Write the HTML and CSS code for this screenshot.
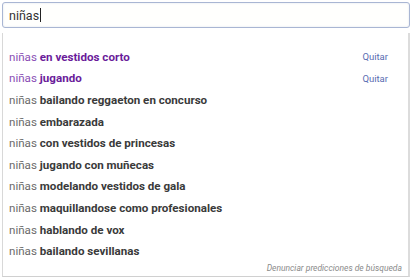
FILE: index.html
```html
<!DOCTYPE html>
<html lang="es">
<head>
    <meta charset="UTF-8">
    <meta name="viewport" content="width=device-width, initial-scale=1.0">
    <title>Búsqueda</title>
    <link rel="stylesheet" href="styles.css">
</head>
<body>
    <div class="search">
        <div class="search-box">
            <span class="search-text">niñas</span><span class="caret"></span>
        </div>

        <!-- Suggestions dropdown -->
        <div class="suggestions">
            <ul class="suggestion-list">
                <li class="suggestion visited">
                    <span class="query">niñas <b>en vestidos corto</b></span>
                    <a href="#" class="remove-link">Quitar</a>
                </li>
                <li class="suggestion visited">
                    <span class="query">niñas <b>jugando</b></span>
                    <a href="#" class="remove-link">Quitar</a>
                </li>
                <li class="suggestion"><span class="query">niñas <b>bailando reggaeton en concurso</b></span></li>
                <li class="suggestion"><span class="query">niñas <b>embarazada</b></span></li>
                <li class="suggestion"><span class="query">niñas <b>con vestidos de princesas</b></span></li>
                <li class="suggestion"><span class="query">niñas <b>jugando con muñecas</b></span></li>
                <li class="suggestion"><span class="query">niñas <b>modelando vestidos de gala</b></span></li>
                <li class="suggestion"><span class="query">niñas <b>maquillandose como profesionales</b></span></li>
                <li class="suggestion"><span class="query">niñas <b>hablando de vox</b></span></li>
                <li class="suggestion"><span class="query">niñas <b>bailando sevillanas</b></span></li>
            </ul>
            <div class="suggestions-footer">
                <a href="#" class="report-link">Denunciar predicciones de búsqueda</a>
            </div>
        </div>
    </div>
</body>
</html>
```

FILE: styles.css
```css
/* Base */
* {
    margin: 0;
    padding: 0;
    box-sizing: border-box;
}

body {
    background-color: #ffffff;
    font-family: Roboto, 'Liberation Sans', Arial, sans-serif;
    color: #222;
}

.search {
    padding: 2px 4px 0 2px;
}

/* Search input */
.search-box {
    height: 26px;
    border: 1px solid #a9b6d3;
    border-radius: 3px;
    box-shadow: inset 0 0 2px rgba(120, 140, 190, 0.25);
    display: flex;
    align-items: center;
    padding-left: 6px;
    background-color: #fffffd;
}

.search-text {
    font-size: 12.5px;
    color: #333;
}

.caret {
    display: inline-block;
    width: 1px;
    height: 14px;
    background-color: #222;
    margin-left: 1px;
}

/* Suggestions dropdown */
.suggestions {
    margin-top: 5px;
    border-left: 1px solid #d8d8d8;
    border-right: 2px solid #dcdcdc;
    border-bottom: 1px solid #d0d0d0;
    background-color: #ffffff;
    padding-top: 13px;
}

.suggestion-list {
    list-style: none;
}

.suggestion {
    display: flex;
    justify-content: space-between;
    align-items: center;
    height: 21.6px;
    padding: 0 20px 0 6px;
    font-size: 11.6px;
}

.query {
    color: #6b6b6b;
}

.query b {
    color: #3a3a3a;
    font-weight: 700;
}

.visited .query {
    color: #8a4fb5;
}

.visited .query b {
    color: #6a1b9a;
}

.remove-link {
    font-size: 9.5px;
    color: #5a6cb2;
    text-decoration: none;
}

.suggestions-footer {
    display: flex;
    justify-content: flex-end;
    padding: 1px 6px 3px 0;
}

.report-link {
    font-size: 8.5px;
    font-style: italic;
    color: #8a8a8a;
    text-decoration: none;
}
```
